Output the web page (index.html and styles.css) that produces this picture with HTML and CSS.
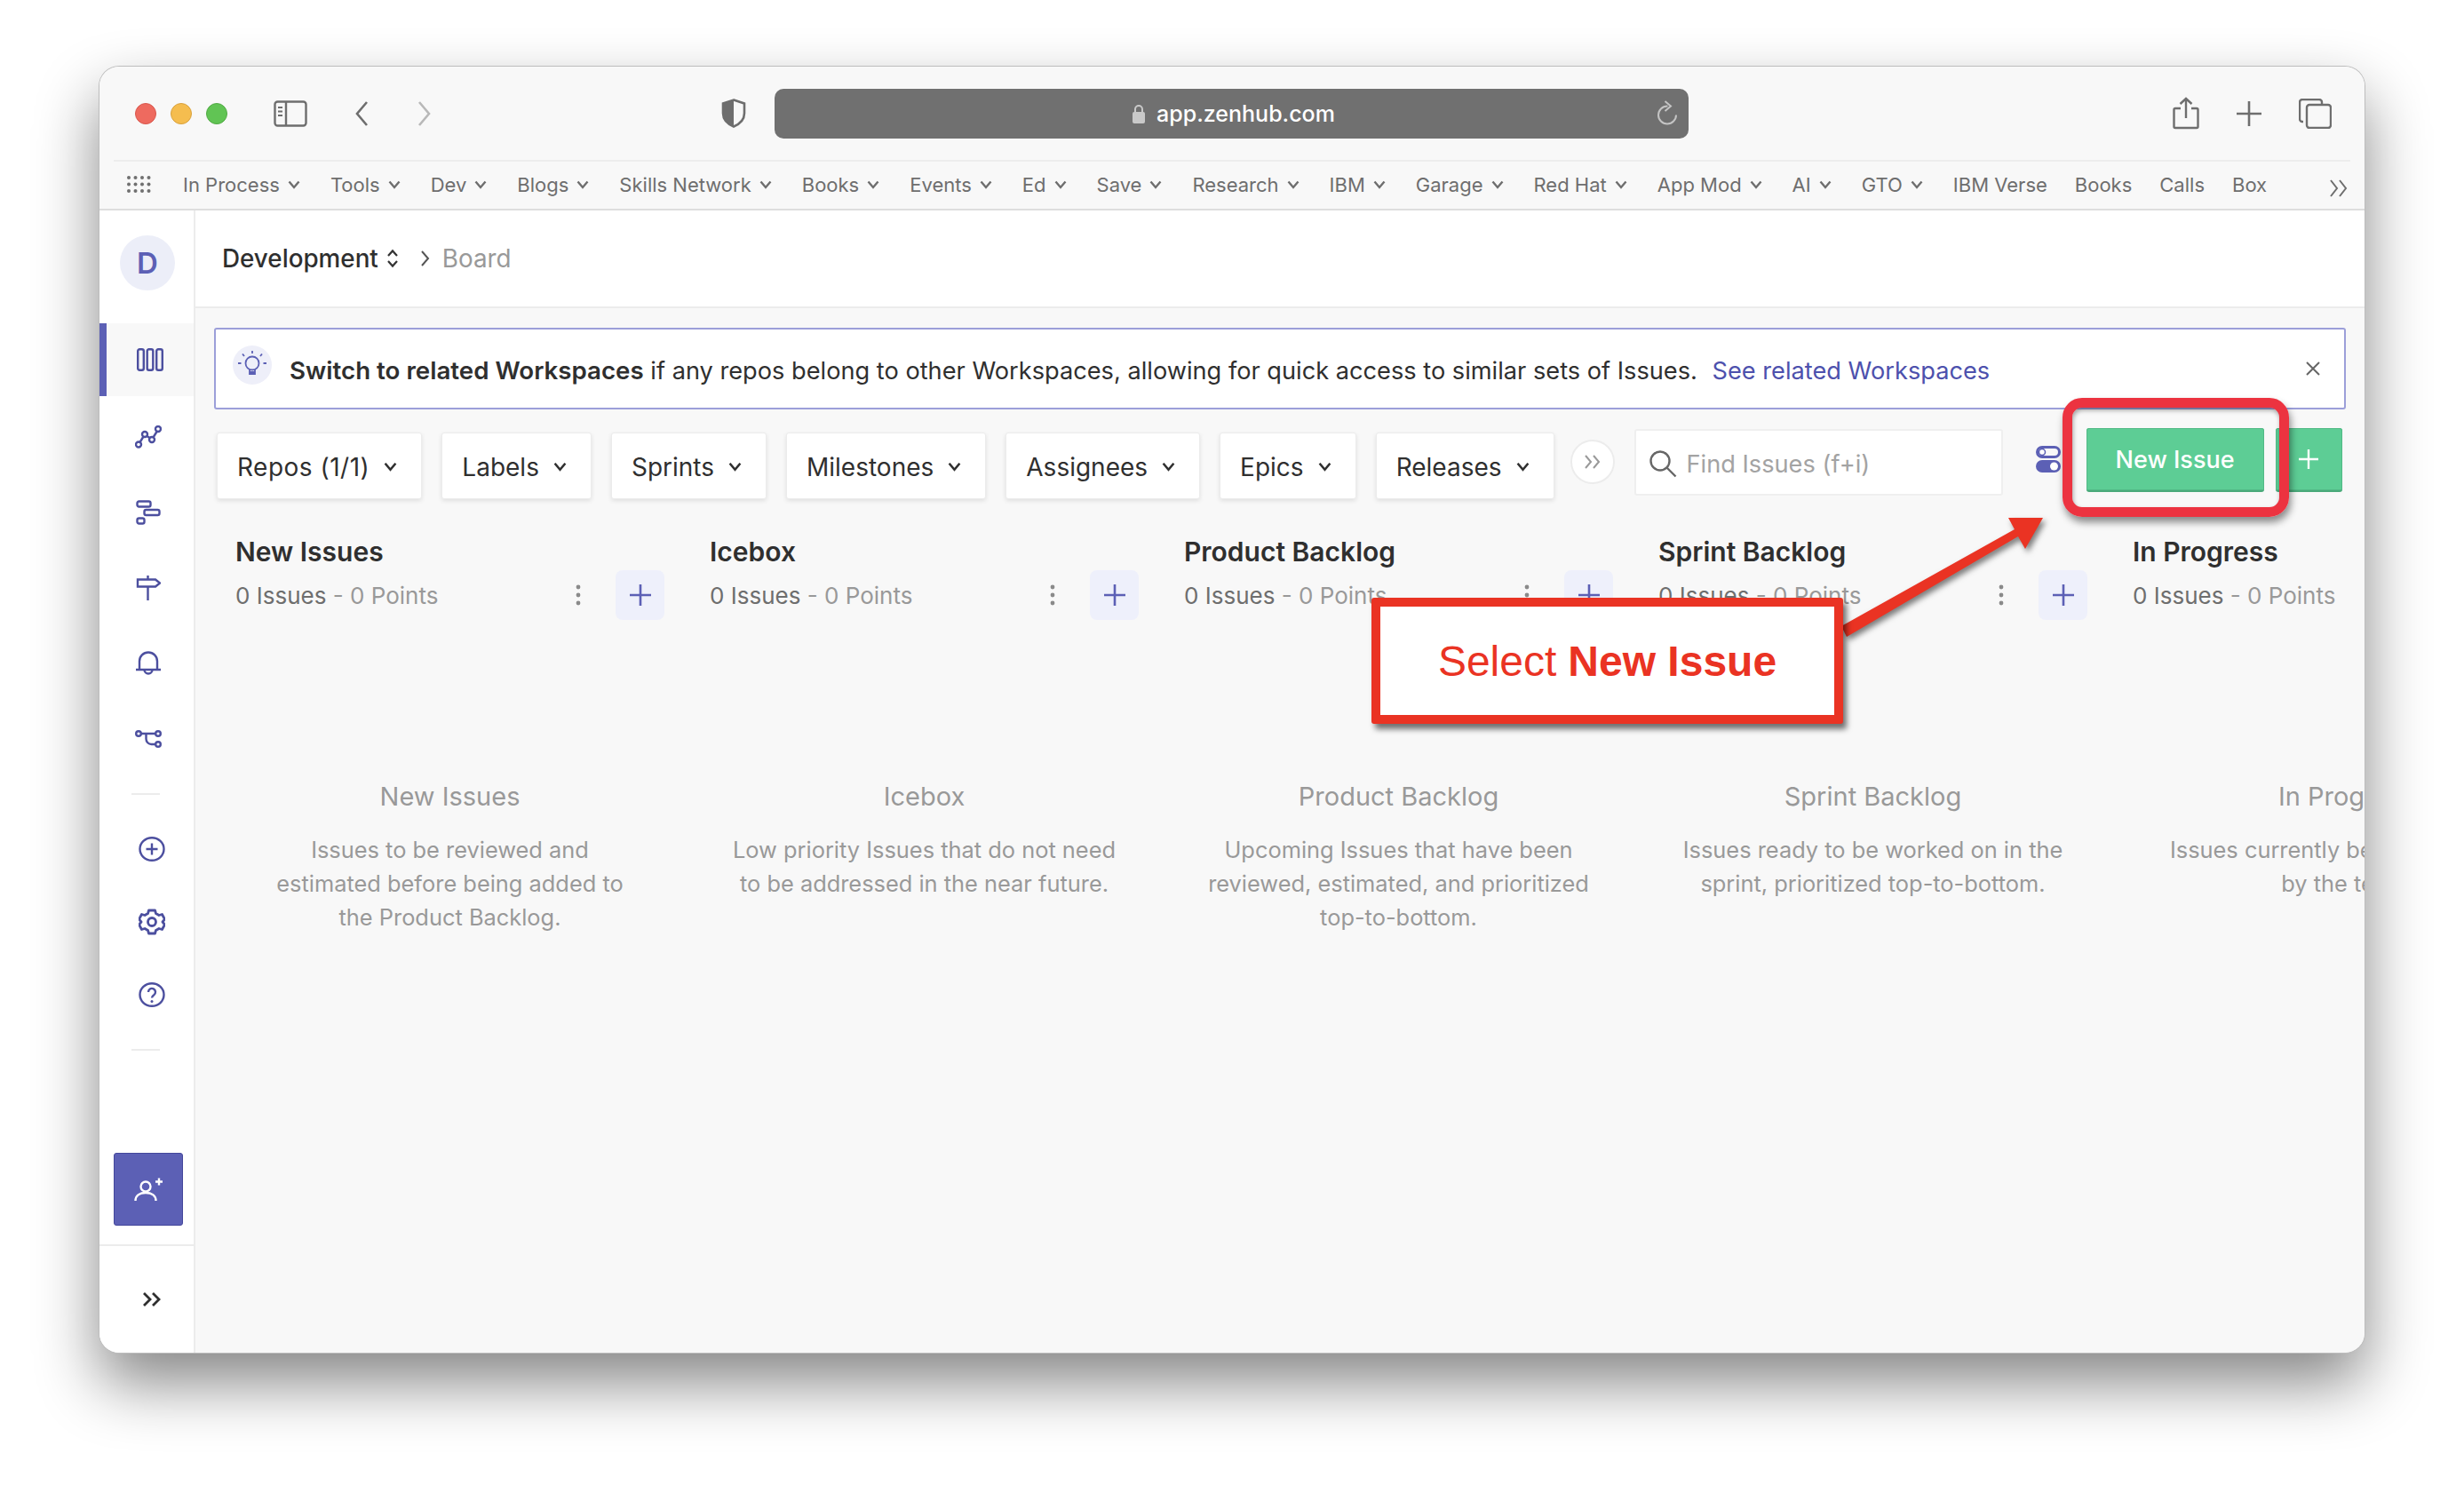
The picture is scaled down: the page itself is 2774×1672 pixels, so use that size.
FILE: index.html
```html
<!DOCTYPE html>
<html lang="en">
<head>
    <meta charset="UTF-8">
    <title>Development - Board</title>
    <link rel="stylesheet" href="styles.css">
</head>
<body>
    <svg class="defs" width="0" height="0">
        <symbol id="chev" viewBox="0 0 14 10"><path d="M1.500 1.500 7 8l5.500-6.500" fill="none" stroke="currentColor" stroke-width="2.400"/></symbol>
        <symbol id="plus" viewBox="0 0 24 24"><path d="M12 0v24M0 12h24" fill="none" stroke="currentColor" stroke-width="2.600"/></symbol>
        <symbol id="dots" viewBox="0 0 6 24"><circle cx="3" cy="3" r="2.400" fill="currentColor"/><circle cx="3" cy="12" r="2.400" fill="currentColor"/><circle cx="3" cy="21" r="2.400" fill="currentColor"/></symbol>
    </svg>

    <div class="window">
        <div class="toolbar">
            <span class="light red"></span>
            <span class="light yellow"></span>
            <span class="light green"></span>
            <svg class="tb-side" width="38" height="30" viewBox="0 0 38 30" fill="none" stroke="#6e6e6e" stroke-width="2.400"><rect x="1.500" y="1.500" width="35" height="27" rx="3"/><path d="M14 1.500v27"/><path d="M5 8h5M5 12.500h5M5 17h5" stroke-width="2"/></svg>
            <svg class="tb-back" width="16" height="30" viewBox="0 0 16 30" fill="none" stroke="#6e6e6e" stroke-width="2.600"><path d="M14 2 3 15l11 13"/></svg>
            <svg class="tb-fwd" width="16" height="30" viewBox="0 0 16 30" fill="none" stroke="#b8b8b8" stroke-width="2.600"><path d="m2 2 11 13L2 28"/></svg>
            <svg class="tb-shield" width="28" height="33" viewBox="0 0 28 33"><path d="M14 1.500 26 5.500v11c0 7-5 12-12 15C7 28.500 2 23.500 2 16.500v-11z" fill="none" stroke="#6e6e6e" stroke-width="2.600"/><path d="M14 1.500v30C7 28.500 2 23.500 2 16.500v-11z" fill="#6e6e6e"/></svg>
            <div class="address">
                <svg class="lock" width="16" height="22" viewBox="0 0 16 22"><path d="M4 10V6a4 4 0 0 1 8 0v4" fill="none" stroke="#c9c9c9" stroke-width="2"/><rect x="1" y="9" width="14" height="13" rx="2" fill="#c9c9c9"/></svg>
                <span>app.zenhub.com</span>
                <svg class="reload" width="24" height="28" viewBox="0 0 24 28" fill="none" stroke="#c4c4c4" stroke-width="2"><path d="M12.500 6.500H12a10 10 0 1 0 10 10"/><path d="m9.500 1 6.500 5.500-6.500 5.500"/></svg>
            </div>
            <div class="tb-right">
                <svg width="30" height="37" viewBox="0 0 30 37" fill="none" stroke="#6e6e6e" stroke-width="2.400"><path d="M9 13H3a1.500 1.500 0 0 0-1.500 1.500v19A1.500 1.500 0 0 0 3 35h24a1.500 1.500 0 0 0 1.500-1.500v-19A1.500 1.500 0 0 0 27 13h-6"/><path d="M15 24V2M8.500 8 15 2l6.500 6"/></svg>
                <svg width="28" height="28" viewBox="0 0 28 28" fill="none" stroke="#6e6e6e" stroke-width="2.600"><path d="M14 0v28M0 14h28"/></svg>
                <svg width="37" height="34" viewBox="0 0 37 34" fill="none" stroke="#6e6e6e" stroke-width="2.400"><path d="M5 26H4a3 3 0 0 1-3-3V4a3 3 0 0 1 3-3h19a3 3 0 0 1 3 3v2"/><rect x="9" y="7" width="27" height="26" rx="3"/></svg>
            </div>
        </div>
        <div class="tb-divider"></div>
        <div class="bookmarks">
            <svg class="bm-grid" width="27" height="19" viewBox="0 0 27 19" fill="#707070"><circle cx="2" cy="2" r="2"/><circle cx="9.500" cy="2" r="2"/><circle cx="17" cy="2" r="2"/><circle cx="24.500" cy="2" r="2"/><circle cx="2" cy="9.500" r="2"/><circle cx="9.500" cy="9.500" r="2"/><circle cx="17" cy="9.500" r="2"/><circle cx="24.500" cy="9.500" r="2"/><circle cx="2" cy="17" r="2"/><circle cx="9.500" cy="17" r="2"/><circle cx="17" cy="17" r="2"/><circle cx="24.500" cy="17" r="2"/></svg>
            <span class="bm">In Process <svg><use href="#chev"/></svg></span>
            <span class="bm">Tools <svg><use href="#chev"/></svg></span>
            <span class="bm">Dev <svg><use href="#chev"/></svg></span>
            <span class="bm">Blogs <svg><use href="#chev"/></svg></span>
            <span class="bm">Skills Network <svg><use href="#chev"/></svg></span>
            <span class="bm">Books <svg><use href="#chev"/></svg></span>
            <span class="bm">Events <svg><use href="#chev"/></svg></span>
            <span class="bm">Ed <svg><use href="#chev"/></svg></span>
            <span class="bm">Save <svg><use href="#chev"/></svg></span>
            <span class="bm">Research <svg><use href="#chev"/></svg></span>
            <span class="bm">IBM <svg><use href="#chev"/></svg></span>
            <span class="bm">Garage <svg><use href="#chev"/></svg></span>
            <span class="bm">Red Hat <svg><use href="#chev"/></svg></span>
            <span class="bm">App Mod <svg><use href="#chev"/></svg></span>
            <span class="bm">AI <svg><use href="#chev"/></svg></span>
            <span class="bm">GTO <svg><use href="#chev"/></svg></span>
            <span class="bm">IBM Verse</span>
            <span class="bm">Books</span>
            <span class="bm">Calls</span>
            <span class="bm">Box</span>
            <svg class="bm-more" width="22" height="22" viewBox="0 0 22 22" fill="none" stroke="#6e6e6e" stroke-width="2"><path d="m2 2 7 9-7 9M12 2l7 9-7 9"/></svg>
        </div>

        <div class="app">
            <nav class="sidebar">
                <div class="avatar">D</div>
                <div class="nav-item active">
                    <svg width="30" height="26" viewBox="0 0 30 26" fill="none" stroke="#4c4f9f" stroke-width="2.400"><rect x="1.200" y="1.200" width="6.600" height="23.600" rx="2"/><rect x="11.700" y="1.200" width="6.600" height="23.600" rx="2"/><rect x="22.200" y="1.200" width="6.600" height="23.600" rx="2"/></svg>
                </div>
                <div class="nav-item">
                    <svg width="30" height="26" viewBox="0 0 30 26" fill="none" stroke="#4c4f9f" stroke-width="2.400"><circle cx="4" cy="21.500" r="3"/><circle cx="11" cy="10" r="3"/><circle cx="19" cy="16" r="3"/><circle cx="26" cy="4" r="3"/><path d="m5.500 19 4-6.500M13.500 12l3 2M20.500 13.500 24.500 7"/></svg>
                </div>
                <div class="nav-item">
                    <svg width="28" height="28" viewBox="0 0 28 28" fill="none" stroke="#4c4f9f" stroke-width="2.400"><rect x="1.500" y="1.500" width="15" height="6" rx="2"/><rect x="9.500" y="11" width="17" height="6" rx="2"/><rect x="1.500" y="20.500" width="8" height="6" rx="2"/></svg>
                </div>
                <div class="nav-item">
                    <svg width="28" height="30" viewBox="0 0 28 30" fill="none" stroke="#4c4f9f" stroke-width="2.400"><path d="M2 5.500h20l5 4-5 4H2zM13.500 1v4.500M13.500 13.500V29"/></svg>
                </div>
                <div class="nav-item">
                    <svg width="28" height="28" viewBox="0 0 28 28" fill="none" stroke="#4c4f9f" stroke-width="2.400"><path d="M0 21h28M4 21V11.500a10 10 0 0 1 20 0V21"/><path d="M9.500 21a4.500 4.500 0 0 0 9 0"/></svg>
                </div>
                <div class="nav-item short">
                    <svg width="30" height="22" viewBox="0 0 30 22" fill="none" stroke="#4c4f9f" stroke-width="2.400"><circle cx="4" cy="5" r="2.800"/><circle cx="26" cy="5" r="2.800"/><circle cx="26" cy="17" r="2.800"/><path d="M7 5h16M12.500 5v6a6 6 0 0 0 6 6H23"/></svg>
                </div>
                <div class="nav-rule top"></div>
                <div class="nav-item alt">
                    <svg width="30" height="28" viewBox="0 0 30 28" fill="none" stroke="#4c4f9f" stroke-width="2.400"><ellipse cx="15" cy="14" rx="13.500" ry="12.800"/><path d="M15 7.500v13M8.500 14h13"/></svg>
                </div>
                <div class="nav-item alt">
                    <svg width="30" height="30" viewBox="0 0 30 30" fill="none" stroke="#4c4f9f" stroke-width="2.800"><path d="M11.500 2h7l1 3.500 3.500 2 3.500-1 3 5.500-2.500 3 2.500 3-3 5.500-3.500-1-3.500 2-1 3.500h-7l-1-3.500-3.500-2-3.500 1-3-5.500 2.500-3-2.500-3 3-5.500 3.500 1 3.500-2z" stroke-linejoin="round"/><circle cx="15" cy="15" r="4.500"/></svg>
                </div>
                <div class="nav-item alt">
                    <svg width="30" height="28" viewBox="0 0 30 28"><ellipse cx="15" cy="14" rx="13.500" ry="12.800" fill="none" stroke="#4c4f9f" stroke-width="2.400"/><path d="M11 11a4 4 0 1 1 6.300 3.200c-1.500 1-2.300 1.700-2.300 3.300" fill="none" stroke="#4c4f9f" stroke-width="2.400"/><circle cx="15" cy="21.500" r="1.500" fill="#4c4f9f"/></svg>
                </div>
                <div class="nav-rule bottom"></div>
                <div class="invite">
                    <svg width="32" height="30" viewBox="0 0 32 30" fill="none" stroke="#fff" stroke-width="2.400"><circle cx="13" cy="12" r="5.500"/><path d="M1.500 28c0-6 5-9 11.500-9s11.500 3 11.500 9M24 6.500h8M28 2.500v8"/></svg>
                </div>
                <div class="collapse">
                    <svg width="22" height="18" viewBox="0 0 22 18" fill="none" stroke="#2f2f2f" stroke-width="2.800"><path d="m2 2 7 7-7 7M12 2l7 7-7 7"/></svg>
                </div>
            </nav>

            <div class="main">
                <header class="crumbs">
                    <span class="crumb-ws">Development</span>
                    <svg class="updown" width="14" height="22" viewBox="0 0 14 22" fill="none" stroke="#333" stroke-width="2.200"><path d="m2 8 5-5.500L12 8M2 14l5 5.500 5-5.500"/></svg>
                    <svg class="crumb-sep" width="12" height="20" viewBox="0 0 12 20" fill="none" stroke="#555" stroke-width="2"><path d="m2 2 7 8-7 8"/></svg>
                    <span class="crumb-page">Board</span>
                </header>

                <div class="banner">
                    <span class="bulb">
                        <svg width="34" height="34" viewBox="0 0 34 34" fill="none" stroke="#5c60b5" stroke-width="1.800"><circle cx="17" cy="15" r="7.500"/><path d="M14 22v5h6v-5M14 25h6M17 1v3M6 4.500 8 7M28 4.500 26 7M1 15h3.500M29.500 15H33"/></svg>
                    </span>
                    <p><b>Switch to related Workspaces</b> if any repos belong to other Workspaces, allowing for quick access to similar sets of Issues. <a>See related Workspaces</a></p>
                    <svg class="banner-close" width="18" height="18" viewBox="0 0 18 18" fill="none" stroke="#666" stroke-width="2"><path d="m2 2 14 14M16 2 2 16"/></svg>
                </div>

                <div class="filters">
                    <button class="filter">Repos (1/1) <svg><use href="#chev"/></svg></button>
                    <button class="filter">Labels <svg><use href="#chev"/></svg></button>
                    <button class="filter">Sprints <svg><use href="#chev"/></svg></button>
                    <button class="filter">Milestones <svg><use href="#chev"/></svg></button>
                    <button class="filter">Assignees <svg><use href="#chev"/></svg></button>
                    <button class="filter">Epics <svg><use href="#chev"/></svg></button>
                    <button class="filter">Releases <svg><use href="#chev"/></svg></button>
                    <span class="more">
                        <svg width="20" height="18" viewBox="0 0 20 18" fill="none" stroke="#999" stroke-width="2"><path d="m2 2 6 7-6 7M11 2l6 7-6 7"/></svg>
                    </span>
                    <div class="search">
                        <svg width="32" height="32" viewBox="0 0 32 32" fill="none" stroke="#666" stroke-width="2.400"><circle cx="13" cy="13" r="10.500"/><path d="m20.500 20.500 10 10"/></svg>
                        <span>Find Issues (f+i)</span>
                    </div>
                    <svg class="toggle" width="28" height="30" viewBox="0 0 28 30"><rect x="1.500" y="1.500" width="25" height="11" rx="5.500" fill="none" stroke="#5c60b5" stroke-width="3"/><circle cx="7" cy="7" r="3.500" fill="#fff" stroke="#5c60b5" stroke-width="1.500"/><rect y="16" width="28" height="14" rx="7" fill="#5c60b5"/><circle cx="20.500" cy="23" r="4.500" fill="#fff"/></svg>
                    <button class="new-issue">New Issue</button>
                    <button class="new-plus"><svg width="22" height="22"><use href="#plus"/></svg></button>
                </div>

                <div class="board">
                    <section class="col">
                        <h2>New Issues</h2>
                        <div class="col-sub">
                            <span class="counts">0 Issues <i>- 0 Points</i></span>
                            <svg class="col-dots"><use href="#dots"/></svg>
                            <span class="col-add"><svg><use href="#plus"/></svg></span>
                        </div>
                        <div class="empty">
                            <h3>New Issues</h3>
                            <p>Issues to be reviewed and estimated before being added to the Product Backlog.</p>
                        </div>
                    </section>
                    <section class="col">
                        <h2>Icebox</h2>
                        <div class="col-sub">
                            <span class="counts">0 Issues <i>- 0 Points</i></span>
                            <svg class="col-dots"><use href="#dots"/></svg>
                            <span class="col-add"><svg><use href="#plus"/></svg></span>
                        </div>
                        <div class="empty">
                            <h3>Icebox</h3>
                            <p>Low priority Issues that do not need to be addressed in the near future.</p>
                        </div>
                    </section>
                    <section class="col">
                        <h2>Product Backlog</h2>
                        <div class="col-sub">
                            <span class="counts">0 Issues <i>- 0 Points</i></span>
                            <svg class="col-dots"><use href="#dots"/></svg>
                            <span class="col-add"><svg><use href="#plus"/></svg></span>
                        </div>
                        <div class="empty">
                            <h3>Product Backlog</h3>
                            <p>Upcoming Issues that have been reviewed, estimated, and prioritized top-to-bottom.</p>
                        </div>
                    </section>
                    <section class="col">
                        <h2>Sprint Backlog</h2>
                        <div class="col-sub">
                            <span class="counts">0 Issues <i>- 0 Points</i></span>
                            <svg class="col-dots"><use href="#dots"/></svg>
                            <span class="col-add"><svg><use href="#plus"/></svg></span>
                        </div>
                        <div class="empty">
                            <h3>Sprint Backlog</h3>
                            <p>Issues ready to be worked on in the sprint, prioritized top-to-bottom.</p>
                        </div>
                    </section>
                    <section class="col">
                        <h2>In Progress</h2>
                        <div class="col-sub">
                            <span class="counts">0 Issues <i>- 0 Points</i></span>
                        </div>
                        <div class="empty">
                            <h3>In Progress</h3>
                            <p>Issues currently being worked on by the team.</p>
                        </div>
                    </section>
                </div>
            </div>
        </div>

        <!-- annotation drawn over the screenshot -->
        <div class="mark"></div>
        <svg class="arrow" viewBox="112 75 2550 1448"><polygon points="2073,705 2268,596 2261,583 2300,583 2280,618 2272,604 2079,717" fill="#ea3323"/></svg>
        <div class="callout">Select <b>New Issue</b></div>
    </div>
</body>
</html>
```

FILE: styles.css
```css
* {
    box-sizing: border-box;
}
html, body {
    margin: 0;
    padding: 0;
    height: 100%;
}
body {
    font-family: Inter, "Noto Sans", sans-serif;
    background-color: #fff;
    color: #2f2f2f;
    overflow: hidden;
}
.defs {
    position: absolute;
}
.window {
    position: relative;
    width: 2550px;
    height: 1448px;
    margin: 75px 0 0 112px;
    border-radius: 22px;
    overflow: hidden;
    background-color: #f8f8f8;
}
body::before {
    content: "";
    position: absolute;
    left: 112px;
    top: 75px;
    width: 2550px;
    height: 1448px;
    border-radius: 22px;
    box-shadow: 0 0 0 1px #bdbdbd, 0 34px 70px rgba(0, 0, 0, 0.48);
}

/* browser chrome */
.toolbar {
    display: flex;
    align-items: center;
    height: 105px;
    padding: 0 37px 0 40px;
}
.light {
    width: 24px;
    height: 24px;
    border-radius: 50%;
    margin-right: 16px;
    margin-top: 1px;
}
.red { background-color: #ee6a5f; border: 1px solid #d9574d; }
.yellow { background-color: #f5bd4f; border: 1px solid #d9a13c; }
.green { background-color: #61c454; border: 1px solid #51a944; }
.tb-side { margin-left: 36px; }
.tb-back { margin-left: 53px; }
.tb-fwd { margin-left: 55px; }
.tb-shield { margin-left: 326px; }
.address {
    position: relative;
    display: flex;
    align-items: center;
    justify-content: center;
    gap: 12px;
    width: 1029px;
    height: 56px;
    margin-left: 32px;
    padding: 1px 0 0 4px;
    background-color: #707070;
    border-radius: 10px;
    color: #fff;
    font-size: 25px;
    font-weight: 500;
}
.reload {
    position: absolute;
    right: 12px;
    top: 13px;
}
.tb-right {
    display: flex;
    align-items: center;
    gap: 42px;
    margin-left: auto;
}
.tb-divider {
    height: 2px;
    margin: 0 16px;
    background-color: #ededed;
}
.bookmarks {
    display: flex;
    align-items: center;
    height: 55px;
    padding: 0 0 2px 31px;
    border-bottom: 2px solid #dedede;
    color: #6e6e6e;
    font-size: 22px;
    white-space: nowrap;
}
.bm-grid {
    margin-right: 36px;
}
.bm {
    display: inline-flex;
    align-items: center;
    gap: 9px;
    margin-right: 31px;
}
.bm svg {
    width: 14px;
    height: 10px;
    margin-right: 3px;
}
.bm-more {
    margin-left: auto;
    margin-right: 18px;
    margin-top: 8px;
}

/* app */
.app {
    display: flex;
    height: 1286px;
}
.sidebar {
    display: flex;
    flex-direction: column;
    flex: none;
    width: 108px;
    background-color: #fff;
    border-right: 2px solid #ececec;
    color: #4c4f9f;
}
.avatar {
    width: 62px;
    height: 62px;
    margin: 28px 0 37px 23px;
    border-radius: 50%;
    background-color: #eceef8;
    color: #5c60b5;
    font-size: 33px;
    font-weight: 600;
    line-height: 62px;
    text-align: center;
}
.nav-item {
    display: flex;
    align-items: center;
    justify-content: center;
    height: 85px;
    padding-left: 4px;
}
.nav-item.active {
    height: 82px;
    margin-bottom: 3px;
    background-color: #f8f8f8;
    border-left: 8px solid #5c60b5;
    padding-left: 0;
}
.nav-item.short {
    height: 86px;
}
.nav-item.alt {
    height: 82px;
    padding-left: 12px;
}
.nav-rule {
    width: 32px;
    height: 2px;
    margin-left: 36px;
    background-color: #ececec;
}
.nav-rule.top {
    margin-top: 18px;
    margin-bottom: 20px;
}
.nav-rule.bottom {
    margin-top: 20px;
}
.invite {
    display: flex;
    align-items: center;
    justify-content: center;
    width: 78px;
    height: 82px;
    margin: 115px 0 21px 16px;
    background-color: #5c60b5;
    border: 1px solid #44479b;
    border-radius: 3px;
}
.collapse {
    flex: 1;
    display: flex;
    align-items: center;
    justify-content: center;
    padding: 0 0 0 12px;
    border-top: 2px solid #ececec;
}

.main {
    flex: 1;
    min-width: 0;
    overflow: hidden;
}
.crumbs {
    display: flex;
    align-items: center;
    height: 110px;
    padding: 0 0 0 30px;
    background-color: #fff;
    border-bottom: 2px solid #ececec;
    font-size: 27.800px;
}
.crumb-ws {
    font-weight: 500;
}
.updown {
    margin-left: 9px;
}
.crumb-sep {
    margin-left: 24px;
}
.crumb-page {
    margin-left: 13px;
    color: #999;
}

.banner {
    display: flex;
    align-items: center;
    height: 92px;
    margin: 22px 21px 0 21px;
    padding: 0 0 0 19px;
    background-color: #fff;
    border: 2px solid #9c9fd9;
    border-radius: 3px;
    font-size: 27.200px;
}
.banner p {
    margin: 4px 0 0 20px;
    white-space: nowrap;
}
.banner b {
    font-size: 27.700px;
    font-weight: 600;
}
.banner a {
    margin-left: 9px;
    color: #4d51ad;
}
.bulb {
    display: flex;
    align-items: center;
    justify-content: center;
    width: 44px;
    height: 44px;
    margin-top: -8px;
    border-radius: 50%;
    background-color: #eeeff9;
}
.banner-close {
    margin-left: auto;
    margin-right: 26px;
}

.filters {
    display: flex;
    align-items: flex-start;
    height: 141px;
    padding: 21px 0 0 24px;
}
.filter {
    display: flex;
    align-items: center;
    gap: 16px;
    height: 75px;
    margin-top: 5px;
    margin-right: 22px;
    padding: 2px 27px 0 22px;
    background-color: #fff;
    border: 1px solid #ececec;
    border-radius: 3px;
    box-shadow: 0 2px 5px rgba(0, 0, 0, 0.1);
    color: #2f2f2f;
    font-family: inherit;
    font-size: 28px;
    white-space: nowrap;
}
.filter:first-child {
    letter-spacing: 0.5px;
}
.filter svg {
    width: 15px;
    height: 11px;
}
.more {
    display: flex;
    align-items: center;
    justify-content: center;
    flex: none;
    width: 50px;
    height: 50px;
    margin: 13px 22px 0 -4px;
    background-color: #fff;
    border: 2px solid #ececec;
    border-radius: 50%;
}
.search {
    display: flex;
    align-items: center;
    gap: 11px;
    flex: none;
    width: 415px;
    height: 75px;
    margin-top: 1px;
    padding: 3px 0 0 14px;
    background-color: #fff;
    border: 2px solid #efefef;
    border-radius: 3px;
    color: #a3a3a3;
    font-size: 27.200px;
}
.toggle {
    flex: none;
    margin: 20px 0 0 37px;
}
.new-issue,
.new-plus {
    flex: none;
    height: 72px;
    background-color: #5dcd95;
    border: none;
    border-bottom: 2px solid #4aa97a;
    border-radius: 3px;
    box-shadow: inset 0 0 0 1px #52b986;
    color: #fff;
    font-family: inherit;
    font-size: 27px;
    font-weight: 500;
}
.new-issue {
    width: 200px;
    margin-left: 29px;
}
.new-plus {
    display: flex;
    align-items: center;
    justify-content: center;
    width: 75px;
    margin-left: 13px;
}

.board {
    display: grid;
    grid-template-columns: repeat(5, 483px);
    column-gap: 51px;
    padding: 0 0 0 45px;
}
.col h2 {
    margin: 0;
    height: 38px;
    font-size: 30px;
    font-weight: 600;
    line-height: 38px;
    color: #2f2f2f;
    white-space: nowrap;
}
.col-sub {
    display: flex;
    align-items: center;
    height: 56px;
    margin-top: 2px;
}
.counts {
    color: #6e6e6e;
    font-size: 26px;
    white-space: nowrap;
}
.counts i {
    color: #999;
    font-style: normal;
}
.col-dots {
    width: 6px;
    height: 24px;
    margin-left: auto;
    color: #8a8a8a;
}
.col-add {
    display: flex;
    align-items: center;
    justify-content: center;
    width: 55px;
    height: 56px;
    margin-left: 39px;
    background-color: #eef0fb;
    border-radius: 8px;
    color: #5c60b5;
}
.col-add svg {
    width: 24px;
    height: 24px;
}
.empty {
    margin-top: 179px;
    text-align: center;
    color: #999;
}
.empty h3 {
    margin: 0;
    font-size: 29px;
    font-weight: 400;
    line-height: 40px;
}
.empty p {
    margin: 21px 0 0 0;
    padding: 0 24px;
    font-size: 25.400px;
    line-height: 38px;
}

/* annotation */
.mark {
    position: absolute;
    left: 2210px;
    top: 373px;
    width: 255px;
    height: 134px;
    border: 11px solid #ec3340;
    border-radius: 22px;
    box-shadow: 2px 6px 8px rgba(0, 0, 0, 0.45), inset 1px 3px 5px rgba(0, 0, 0, 0.35);
}
.arrow {
    position: absolute;
    left: 0;
    top: 0;
    width: 2550px;
    height: 1448px;
    filter: drop-shadow(3px 4px 3px rgba(0, 0, 0, 0.5));
}
.callout {
    position: absolute;
    left: 1432px;
    top: 598px;
    display: flex;
    align-items: center;
    justify-content: center;
    gap: 13px;
    width: 531px;
    height: 142px;
    background-color: #fff;
    border: 10px solid #ea3323;
    border-radius: 3px;
    box-shadow: 4px 6px 6px rgba(0, 0, 0, 0.55);
    color: #ea3323;
    font-family: "Liberation Sans", Arial, sans-serif;
    font-size: 48px;
}
```
